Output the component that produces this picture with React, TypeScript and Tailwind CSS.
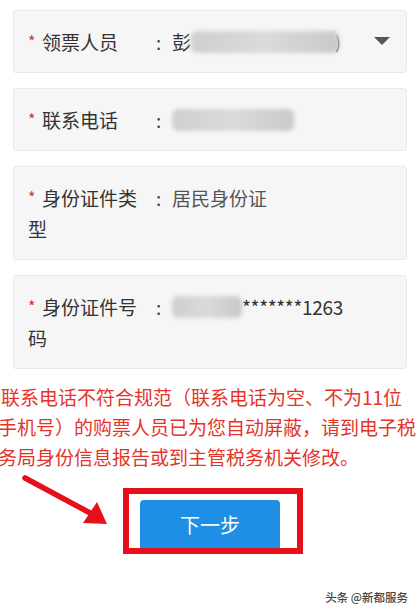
import React from "react";

const font = { fontFamily: '"Noto Sans CJK SC", "Noto Sans", sans-serif' };

function Blur({ w }: { w: number }) {
  return (
    <span
      className="inline-block h-[22px] align-middle rounded-[6px] bg-gradient-to-r from-[#cfcfcf] via-[#dadada] to-[#c9c9c9] blur-[2px]"
      style={{ width: w }}
    />
  );
}

function Field({
  label,
  children,
  dropdown,
}: {
  label: string;
  children: React.ReactNode;
  dropdown?: boolean;
}) {
  return (
    <div className="flex items-start bg-[#f6f6f6] border border-[#e9e9e9] rounded-[3px] pl-[14px] pr-[15px] py-[15px] text-[19px] leading-[31px] text-[#333]">
      <div className="w-[124px] shrink-0">
        <span className="inline-block w-[14px] text-[16px] text-[#d9302a] align-top">*</span>
        {label}
      </div>
      <div className="w-[20px] shrink-0 pl-[4px] text-[#444]">:</div>
      <div className="flex-1 flex items-center whitespace-nowrap h-[31px]">{children}</div>
      {dropdown && (
        <svg width="16" height="8" viewBox="0 0 16 8" className="mt-[11px] mr-[1px]">
          <path d="M0 0 L16 0 L8 8 Z" fill="#555" />
        </svg>
      )}
    </div>
  );
}

export default function App() {
  return (
    <div className="relative w-[418px] h-[612px] bg-white overflow-hidden" style={font}>
      <div className="flex flex-col gap-[15px] pl-[13px] pr-[11px] pt-[10px]">
        <Field label="领票人员" dropdown>
          <span>彭</span>
          <Blur w={148} />
          <span className="text-[17px] -ml-[4px]">)</span>
        </Field>
        <Field label="联系电话">
          <Blur w={122} />
        </Field>
        <Field label="身份证件类型">
          <span className="text-[#555]">居民身份证</span>
        </Field>
        <Field label="身份证件号码">
          <Blur w={70} />
          <span className="text-[#333] tracking-[-0.3px]">*******1263</span>
        </Field>
      </div>

      <div className="mt-[13px] text-[19px] leading-[30px] text-[#e5332a] whitespace-nowrap">
        <div className="ml-[1px]">联系电话不符合规范（联系电话为空、不为11位</div>
        <div className="-ml-[2px]">手机号）的购票人员已为您自动屏蔽，请到电子税</div>
        <div className="-ml-[2px]">务局身份信息报告或到主管税务机关修改。</div>
      </div>

      <div className="mt-[16px] flex justify-start pl-[123px]">
        <div className="w-[180px] h-[66px] border-[6px] border-[#e5101a] pt-[6px] pl-[11px] pr-[17px] overflow-hidden">
          <button className="w-full h-[60px] rounded-[4px] bg-[#1e8fe4] text-white text-[20px] leading-[50px] flex justify-center">
            下一步
          </button>
        </div>
      </div>

      <div className="mt-[36px] flex justify-end pr-[10px]">
        <span
          className="text-[11.5px] leading-[14px] text-[#444] font-medium"
          style={{ textShadow: "0 0 2px #fff, 0 0 2px #fff" }}
        >
          头条 @新都服务
        </span>
      </div>

      <svg
        className="absolute left-0 top-0 pointer-events-none"
        width="418"
        height="612"
        viewBox="0 0 418 612"
      >
        <line x1="25" y1="478" x2="92" y2="514" stroke="#e5101a" strokeWidth="5.5" strokeLinecap="round" />
        <path d="M83 523 L107 524 L97 502 Z" fill="#e5101a" />
      </svg>
    </div>
  );
}
